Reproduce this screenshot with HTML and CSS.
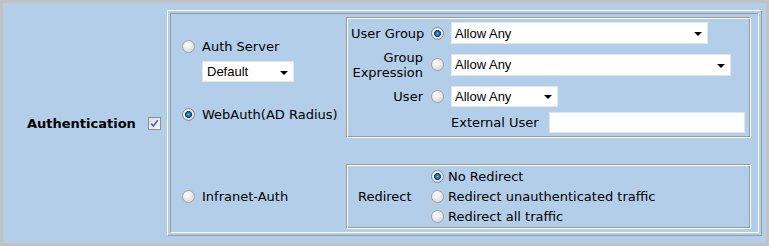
FILE: index.html
```html
<!DOCTYPE html>
<html lang="en">
<head>
    <meta charset="UTF-8">
    <title>Authentication</title>
<link rel="stylesheet" href="styles.css">
</head>
<body>
    <div class="panel">
        <div class="auth-cell">
            <span class="auth-label">Authentication</span>
            <span class="check">
                <svg width="13" height="13" viewBox="0 0 13 13">
                    <defs>
                        <linearGradient id="chk" x1="0" y1="0" x2="1" y2="1">
                            <stop offset="0" stop-color="#d9dde6"/>
                            <stop offset="1" stop-color="#f7f7f9"/>
                        </linearGradient>
                    </defs>
                    <rect x="0.5" y="0.5" width="12" height="12" fill="url(#chk)" stroke="#8e8f94"/>
                    <path d="M3.2 6.4 L5.4 9 L9.8 3.2" fill="none" stroke="#4660b0" stroke-width="1.6"/>
                </svg>
            </span>
        </div>

        <div class="frame">
            <div class="frame-inner">
                <!-- auth server / webauth -->
                <div class="methods methods-top">
                    <label class="opt"><input type="radio" class="radio" name="method"> Auth Server</label>
                    <span class="select sel-default"><select><option>Default</option></select></span>
                    <label class="opt webauth"><input type="radio" class="radio" name="method" checked> WebAuth(AD Radius)</label>
                </div>

                <div class="box user-box">
                    <span class="field-label">User Group</span>
                    <input type="radio" class="radio" name="who" checked>
                    <span class="select sel-group"><select><option>Allow Any</option></select></span>

                    <span class="field-label two-line">Group<br>Expression</span>
                    <input type="radio" class="radio" name="who">
                    <span class="select sel-expr"><select><option>Allow Any</option></select></span>

                    <span class="field-label">User</span>
                    <input type="radio" class="radio" name="who">
                    <span class="select sel-user"><select><option>Allow Any</option></select></span>

                    <span></span>
                    <span></span>
                    <span class="external">External User <input type="text" class="text-input"></span>
                </div>

                <!-- infranet -->
                <div class="methods">
                    <label class="opt"><input type="radio" class="radio" name="method"> Infranet-Auth</label>
                </div>

                <div class="box redirect-box">
                    <span class="redirect-label">Redirect</span>
                    <div class="redirect-opts">
                        <label class="ropt"><input type="radio" class="radio" name="redirect" checked> No Redirect</label>
                        <label class="ropt"><input type="radio" class="radio" name="redirect"> Redirect unauthenticated traffic</label>
                        <label class="ropt"><input type="radio" class="radio" name="redirect"> Redirect all traffic</label>
                    </div>
                </div>
            </div>
        </div>
    </div>
</body>
</html>
```

FILE: styles.css
```css
body {
    margin: 0;
    font-family: "DejaVu Sans", Verdana, sans-serif;
    font-size: 13px;
    color: #000;
}

.panel {
    box-sizing: border-box;
    width: 769px;
    height: 246px;
    display: flex;
    align-items: stretch;
    padding: 7px 4px 7px 0;
    border: 3px solid #c2c2c2;
    background-color: #b3cee9;
}

.auth-cell {
    width: 164px;
    display: flex;
    align-items: center;
    padding-left: 24px;
    box-sizing: border-box;
}

.auth-label {
    font-weight: bold;
}

.check {
    display: flex;
    margin-left: 12px;
    margin-top: 1px;
}

/* table-like outset / inset frame */
.frame {
    flex: 1;
    padding: 2px;
    border: 1px solid;
    border-color: #fff #9a9a9a #9a9a9a #fff;
}

.frame-inner {
    box-sizing: border-box;
    height: 100%;
    display: grid;
    grid-template-columns: 175px 1fr;
    align-items: center;
    row-gap: 25px;
    padding: 3px 7px 3px 0;
    border: 1px solid;
    border-color: #9a9a9a #fff #fff #9a9a9a;
}

.methods {
    display: flex;
    flex-direction: column;
    align-items: flex-start;
    padding-left: 11px;
}

.methods-top {
    padding-top: 5px;
}

.opt {
    display: flex;
    align-items: center;
    height: 16px;
    gap: 7px;
}

.webauth {
    margin-top: 24px;
}

.radio {
    appearance: none;
    -webkit-appearance: none;
    box-sizing: border-box;
    width: 13px;
    height: 13px;
    margin: 0;
    border: 1px solid #a3a3a3;
    border-radius: 50%;
    background: radial-gradient(circle at 40% 35%, #ffffff 0, #e6e6e6 55%, #c9c9c9 100%);
}

.radio:checked {
    border-color: #8a8a8a;
    background:
        radial-gradient(circle at 50% 50%, #6ec0ea 0, #1d77b3 1.6px, #0c3f6c 3.2px, transparent 3.8px),
        radial-gradient(circle at 40% 35%, #ffffff 0, #e6e6e6 55%, #c9c9c9 100%);
}

/* select boxes */
.select {
    position: relative;
    display: block;
    box-sizing: border-box;
    height: 22px;
}

.select select {
    appearance: none;
    -webkit-appearance: none;
    box-sizing: border-box;
    width: 100%;
    height: 100%;
    margin: 0;
    padding: 0 0 0 3px;
    border: 1px solid #dfe8f1;
    border-radius: 0;
    background: #fff;
    font-family: "Liberation Sans", Arial, sans-serif;
    font-size: 13px;
    color: #000;
}

.select::after {
    content: "";
    position: absolute;
    right: 6px;
    top: 50%;
    margin-top: -1px;
    border-left: 4px solid transparent;
    border-right: 4px solid transparent;
    border-top: 4px solid #000;
}

.sel-default {
    width: 92px;
    height: 21px;
    margin: 7px 0 0 20px;
}

.sel-default select {
    padding-left: 4px;
}

.sel-group {
    width: 257px;
}

.sel-expr {
    width: 280px;
}

.sel-user {
    width: 107px;
    height: 21px;
}

/* grouped boxes */
.box {
    border: 1px solid;
    border-color: #9a9a9a #fff #fff #9a9a9a;
    box-shadow: inset 1px 1px 0 #fff, inset -1px -1px 0 #9a9a9a;
    padding: 1px;
}

.user-box {
    display: grid;
    grid-template-columns: 80px 20px 1fr;
    grid-template-rows: 22px 31px 22px 21px;
    row-gap: 5px;
    align-items: center;
    padding: 4px 5px 4px 4px;
}

.field-label {
    text-align: right;
    padding-right: 8px;
    white-space: nowrap;
}

.two-line {
    line-height: 15px;
}

.external {
    display: flex;
    align-items: center;
    height: 21px;
}

.text-input {
    flex: 1;
    box-sizing: border-box;
    height: 21px;
    margin: 0 0 0 10px;
    border: 1px solid #dfe8f1;
    background: #fff;
}

.redirect-box {
    display: flex;
    align-items: center;
    padding: 2px 1px 1px 1px;
}

.redirect-label {
    box-sizing: border-box;
    width: 83px;
    padding-left: 10px;
}

.ropt {
    display: flex;
    align-items: center;
    height: 20px;
    gap: 4px;
}
```
